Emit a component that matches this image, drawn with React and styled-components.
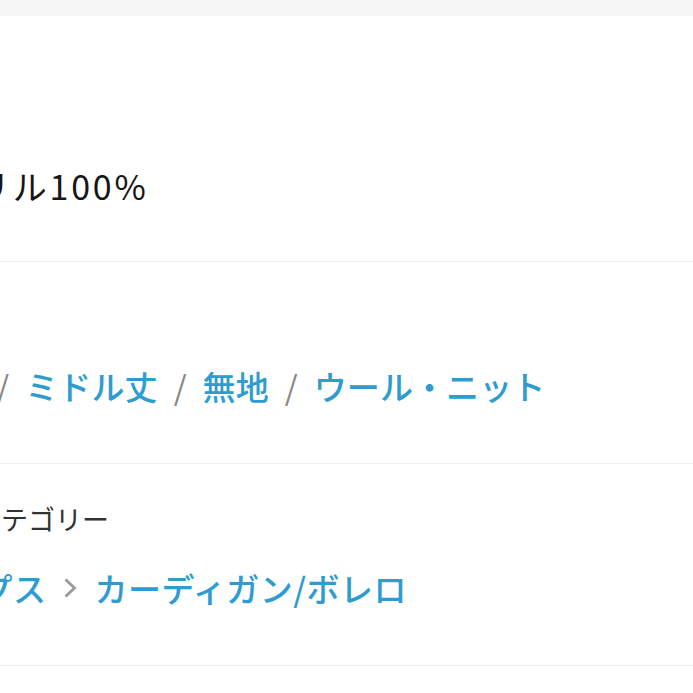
import React from "react";
import styled, { createGlobalStyle } from "styled-components";

const GlobalStyle = createGlobalStyle`
  html, body {
    margin: 0;
    padding: 0;
    background: #fff;
    overflow: hidden;
  }
  body {
    font-family: "Noto Sans CJK JP", "Noto Sans", sans-serif;
    color: #222;
  }
`;

// shift: how far the row starts left of the visible area
const sections = [
  { top: 148, shift: -96, kind: "text", value: "アクリル100%" },
  {
    top: 102,
    shift: -216,
    kind: "tags",
    value: ["カーディガン", "ミドル丈", "無地", "ウール・ニット"],
  },
  {
    top: 37,
    label: "カテゴリー",
    shift: -299,
    kind: "path",
    value: ["レディース", "トップス", "カーディガン/ボレロ"],
  },
];

const Chevron = () => (
  <svg width="14" height="22" viewBox="0 0 14 22">
    <path d="M2.5 2.5 L11.5 11 L2.5 19.5" fill="none" stroke="#9a9a9a" strokeWidth="2.8" />
  </svg>
);

const App = () => {
  return (
    <Page>
      <GlobalStyle />
      <TopBar />
      {sections.map((s, i) => (
        <Section key={i} $top={s.top} $bottom={i === 0 ? 53 : 55}>
          {s.label && <Label>{s.label}</Label>}
          <Value $shift={s.shift}>
            {s.kind === "text" && <PlainText>{s.value}</PlainText>}
            {s.kind === "tags" &&
              s.value.map((t, j) => (
                <React.Fragment key={t}>
                  {j > 0 && <Slash>/</Slash>}
                  <Link $spacing={0.1}>{t}</Link>
                </React.Fragment>
              ))}
            {s.kind === "path" &&
              s.value.map((t, j) => (
                <React.Fragment key={t}>
                  {j > 0 && (
                    <Arrow>
                      <Chevron />
                    </Arrow>
                  )}
                  <Link $spacing={0.5}>{t}</Link>
                </React.Fragment>
              ))}
          </Value>
        </Section>
      ))}
    </Page>
  );
};

const Page = styled.div`
  width: 693px;
  height: 693px;
  overflow: hidden;
  background: #fff;
`;

const TopBar = styled.div`
  height: 16px;
  background: #f7f7f7;
`;

const Section = styled.section`
  padding: ${(p) => p.$top}px 0 ${(p) => p.$bottom}px;
  border-bottom: 1px solid #eeeeee;
`;

const Label = styled.div`
  margin-left: -26px;
  font-size: 27px;
  line-height: 36px;
  color: #333;
  margin-bottom: 29px;
  white-space: nowrap;
`;

const Value = styled.div`
  margin-left: ${(p) => p.$shift}px;
  height: 44px;
  display: flex;
  align-items: center;
  white-space: nowrap;
  font-size: 33px;
  line-height: 44px;
`;

const PlainText = styled.span`
  color: #161616;
  font-size: 34px;
  font-weight: 400;
  letter-spacing: 2.8px;
`;

const Link = styled.span`
  color: #2f9ccf;
  font-weight: 500;
  letter-spacing: ${(p) => p.$spacing}px;
`;

const Slash = styled.span`
  color: #888;
  padding: 0 16px;
`;

const Arrow = styled.span`
  display: flex;
  align-items: center;
  padding: 0 18px 0 16px;
`;

export default App;
